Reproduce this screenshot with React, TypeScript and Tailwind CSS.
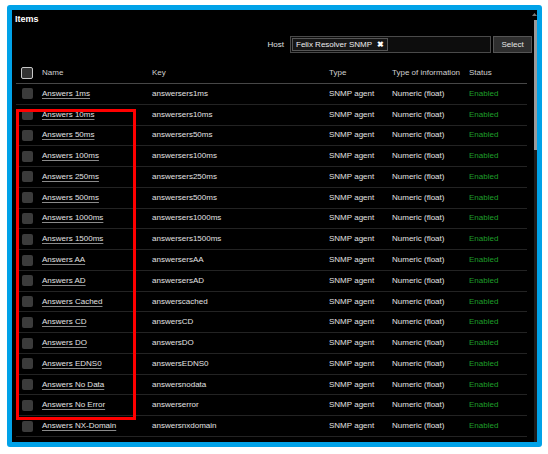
import React from "react";

const rows: [string, string][] = [
  ["Answers 1ms", "answersers1ms"],
  ["Answers 10ms", "answersers10ms"],
  ["Answers 50ms", "answersers50ms"],
  ["Answers 100ms", "answersers100ms"],
  ["Answers 250ms", "answersers250ms"],
  ["Answers 500ms", "answersers500ms"],
  ["Answers 1000ms", "answersers1000ms"],
  ["Answers 1500ms", "answersers1500ms"],
  ["Answers AA", "answersersAA"],
  ["Answers AD", "answersersAD"],
  ["Answers Cached", "answerscached"],
  ["Answers CD", "answersCD"],
  ["Answers DO", "answersDO"],
  ["Answers EDNS0", "answersEDNS0"],
  ["Answers No Data", "answersnodata"],
  ["Answers No Error", "answerserror"],
  ["Answers NX-Domain", "answersnxdomain"],
];

const cols = "grid grid-cols-[26px_110px_177px_63px_77px_58px] items-center";

export default function App() {
  return (
    <div className="relative w-[548px] h-[454px] bg-white overflow-hidden pl-[7px] pt-[5px] font-['Liberation_Sans',Arial,sans-serif]">
      <div className="w-[535px] h-[442px] border-[5px] border-[#00a2e8] rounded-[3px] bg-black flex overflow-hidden">
        <div className="flex-1 overflow-hidden pl-[3px]">
          <div className="h-[17px] pt-[2px] flex items-center text-[9px] font-bold text-white">Items</div>
          <div className="mt-[9px] h-[17px] flex justify-end items-center">
            <span className="text-[8px] text-[#e0e0e0] mr-[6px]">Host</span>
            <div className="w-[201px] h-[17px] bg-[#0d0d0d] border border-[#4a4a4a] flex items-center pl-[1px]">
              <div className="h-[13px] flex items-center gap-[5px] px-[3px] bg-[#161616] border border-[#555] text-[8px] text-[#eee]">
                <span>Felix Resolver SNMP</span>
                <span className="font-bold text-white text-[8px] leading-none">✖</span>
              </div>
            </div>
            <div className="ml-[2px] w-[39px] h-[17px] bg-[#2e2e2e] border border-[#555] flex items-center justify-center text-[8px] text-[#e6e6e6]">
              Select
            </div>
          </div>
          <div className="ml-[1px] w-[511px] mt-[10px]">
            <div className={`${cols} h-[21px] border-b border-[#474747] text-[8px] text-[#d0d0d0]`}>
              <div className="pl-[5px]">
                <div className="w-[12px] h-[12px] rounded-[2px] border-[1.5px] border-[#c8c8c8] bg-[#333]" />
              </div>
              <div>Name</div>
              <div>Key</div>
              <div>Type</div>
              <div>Type of information</div>
              <div>Status</div>
            </div>
            {rows.map(([name, key]) => (
              <div
                key={name}
                className={`${cols} h-[20.77px] border-b border-[#232323] text-[8px] text-[#e2e2e2]`}
              >
                <div className="pl-[6px]">
                  <div className="w-[11px] h-[11px] rounded-[2px] bg-[#3b3b3b]" />
                </div>
                <div>
                  <span className="underline decoration-[#8a8a8a] underline-offset-[2px]">{name}</span>
                </div>
                <div>{key}</div>
                <div>SNMP agent</div>
                <div>Numeric (float)</div>
                <div className="text-[#1f9f2a]">Enabled</div>
              </div>
            ))}
            <div className="h-[20.77px] pl-[6px] pt-[5px]">
              <div className="w-[11px] h-[11px] rounded-[2px] bg-[#3b3b3b]" />
            </div>
          </div>
        </div>
        <div className="w-[5px] flex flex-col items-end">
          <div className="h-[8px] w-[5px] flex items-center justify-center">
            <svg width="5" height="3" viewBox="0 0 5 3">
              <path d="M0 3 L2.5 0 L5 3 Z" fill="#777" />
            </svg>
          </div>
          <div className="mt-[2px] w-[3px] h-[130px] bg-[#9a9a9a]" />
          <div className="w-[3px] flex-1 bg-[#1c1c1c]" />
        </div>
      </div>
      <div className="absolute left-[16px] top-[109px] w-[120px] h-[311px] border-[3px] border-[#ff0000]" />
    </div>
  );
}
